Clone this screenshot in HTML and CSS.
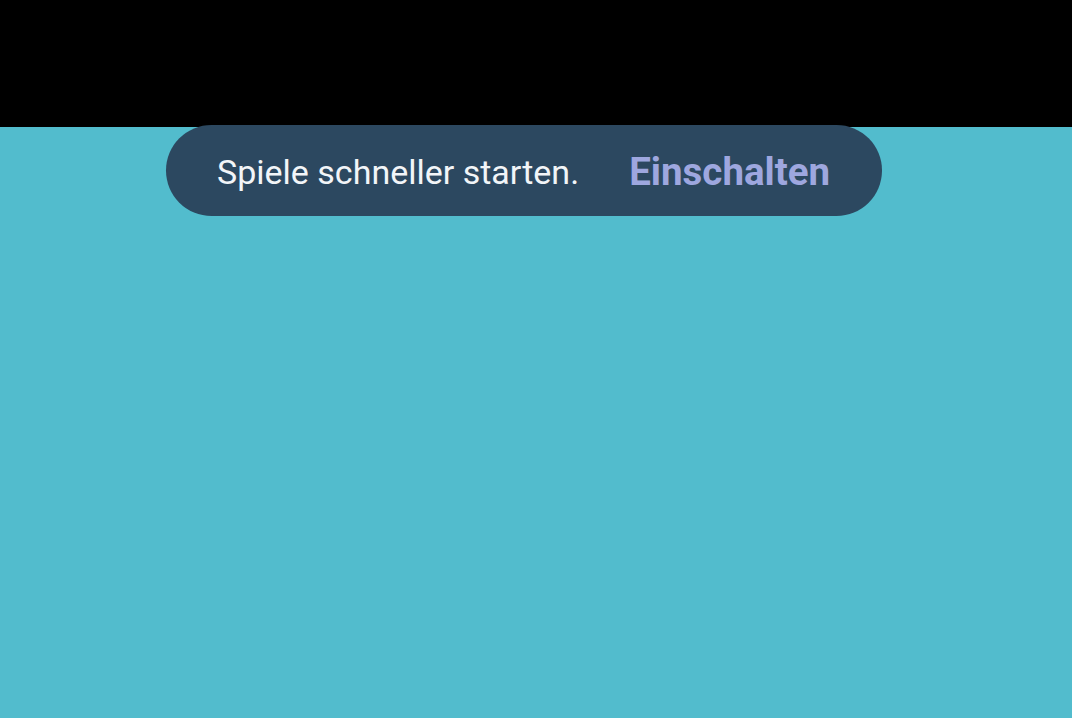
FILE: index.html
```html
<!DOCTYPE html>
<html>
<head>
<meta charset="utf-8">
<link rel="stylesheet" href="styles.css">
</head>
<body>
<div class="topbar"></div>
<main class="stage">
  <div class="snackbar">
    <span class="message">Spiele schneller starten.</span>
    <span class="action">Einschalten</span>
  </div>
</main>
</body>
</html>
```
FILE: styles.css
```css
html, body {
  margin: 0;
  padding: 0;
  height: 100%;
}
body {
  background: #52bccd;
  font-family: Roboto, "Noto Sans", sans-serif;
  overflow: hidden;
}
.topbar {
  height: 127px;
  background: #000;
}
.stage {
  display: flex;
  padding-left: 166px;
}
.snackbar {
  margin-top: -2px;
  width: 716px;
  height: 91px;
  box-sizing: border-box;
  border-radius: 46px;
  background: #2c4860;
  display: flex;
  align-items: center;
  padding-left: 51px;
  padding-top: 2px;
}
.message {
  color: #f2f5f8;
  font-size: 34px;
  font-weight: 400;
}
.action {
  margin-left: 50px;
  color: #9ea7df;
  font-size: 38.5px;
  font-weight: 700;
}
```
